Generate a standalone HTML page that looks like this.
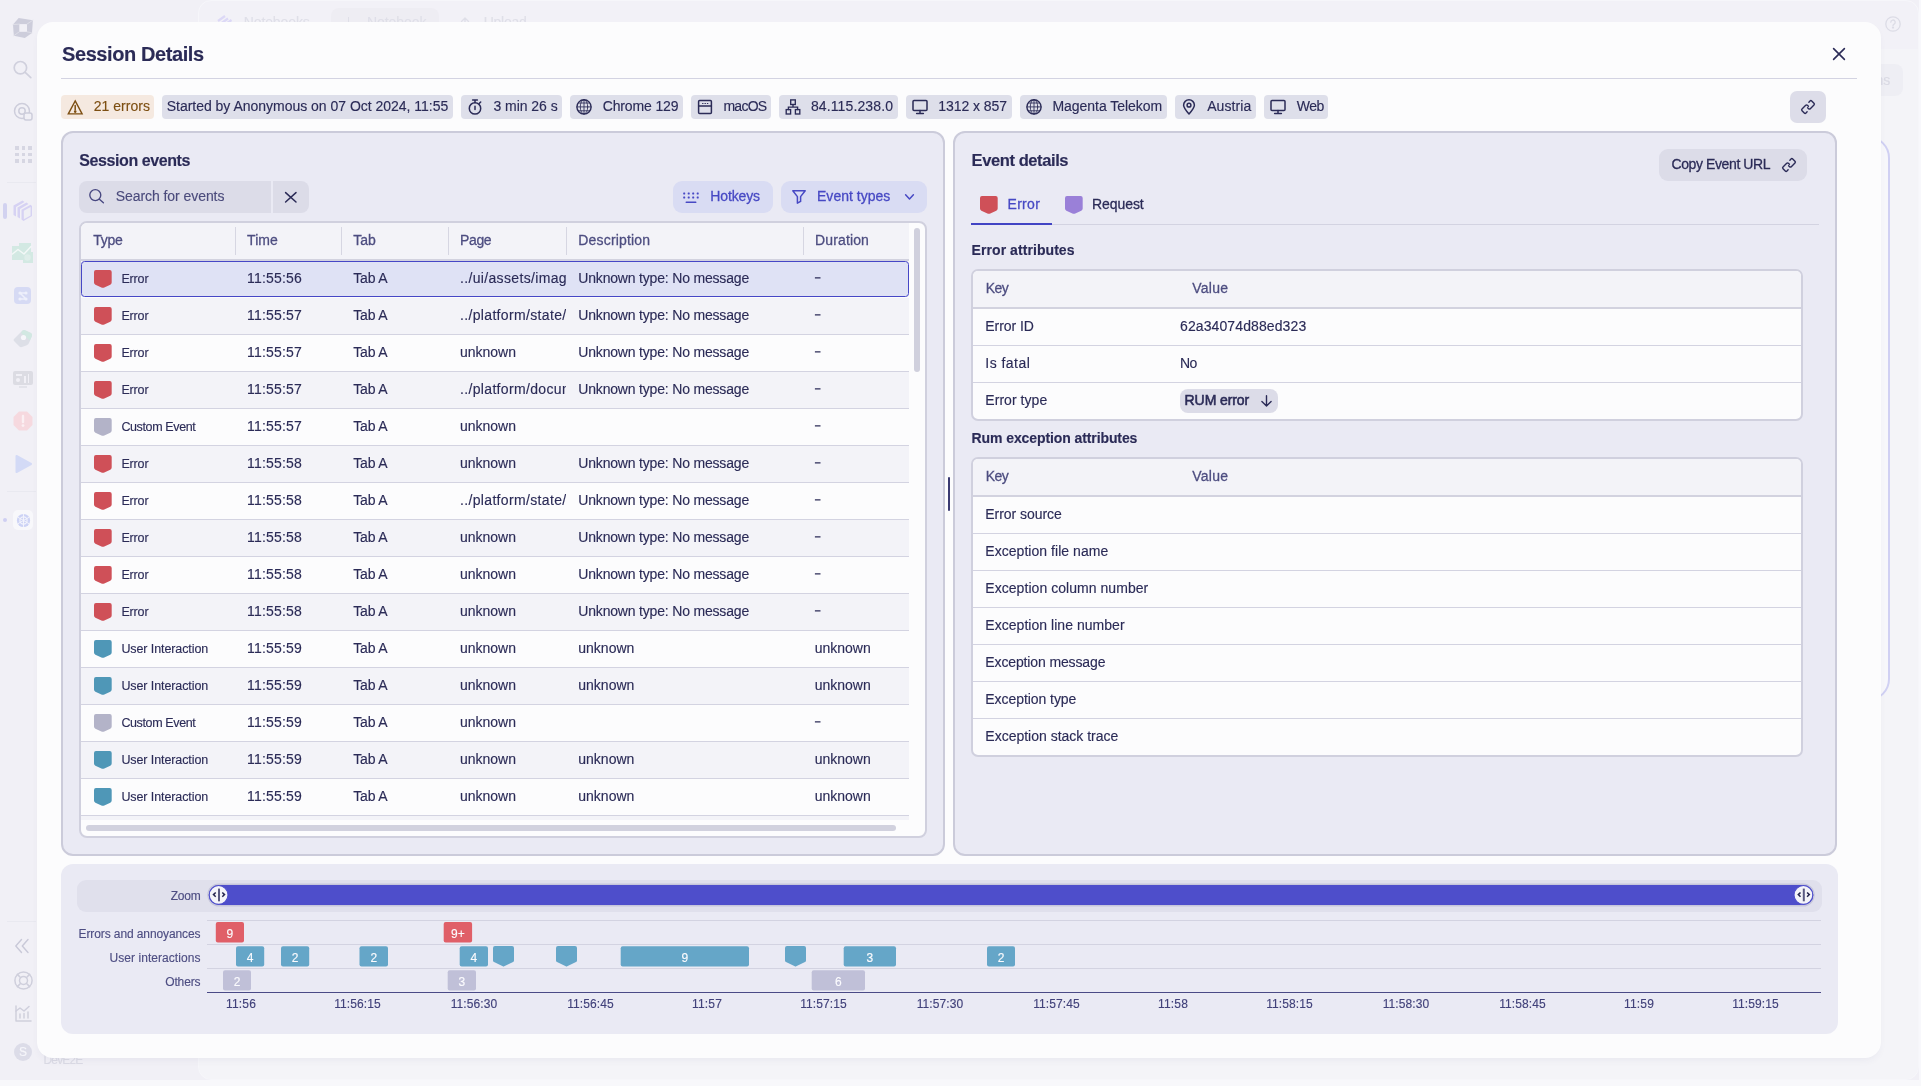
<!DOCTYPE html>
<html><head><meta charset="utf-8"><title>Session Details</title>
<style>
html,body{margin:0;padding:0}
body{width:1921px;height:1086px;overflow:hidden;position:relative;background:#f1f0f6;font-family:"Liberation Sans", sans-serif;}
.a{position:absolute;box-sizing:border-box}
.t{white-space:pre;-webkit-text-stroke:.14px currentColor}
#root{position:absolute;left:0;top:0;width:1921px;height:1086px;will-change:transform}
svg{position:absolute;overflow:visible}

</style></head>
<body><div id="root">
<div class="a" style="left:198px;top:0px;width:1721px;height:1080px;background:linear-gradient(#f2f1f7 0,#f2f1f7 48px,#f4f4f8 48px);border:1px solid #f6f6fa;border-radius:13px;"></div>
<div class="a" style="left:1919px;top:0px;width:2px;height:1086px;background:#f8f8fc;"></div>
<div class="a" style="left:0px;top:1080px;width:1921px;height:6px;background:#f8f8fb;"></div>
<div class="a" style="left:1700px;top:136px;width:190px;height:565px;background:#f7f7fb;border:2px solid #d0d0f3;border-radius:22px;"></div>
<div class="a" style="left:1840px;top:64px;width:63px;height:32px;background:#eeeef4;border-radius:8px;"></div>
<div class="a t" style="top:70.00px;height:20px;line-height:20px;font-size:14px;color:#dadae4;left:1875.5px;">ns</div>
<svg style="left:1885px;top:16px;" width="16" height="16" viewBox="0 0 16 16" fill="none" stroke="#dcdce6" stroke-width="1.3" stroke-linecap="round" stroke-linejoin="round"><circle cx="8" cy="8" r="7.2"/><path d="M5.8 6.2a2.2 2.2 0 1 1 3.3 1.9c-.7.4-1.1.8-1.1 1.6"/><circle cx="8" cy="11.6" r=".5" fill="#dcdce6"/></svg>
<div class="a" style="left:331px;top:8px;width:108px;height:20px;background:#eeedf3;border-radius:8px 8px 0 0;"></div>
<svg style="left:217px;top:14px;" width="16" height="10" viewBox="0 0 16 10" fill="none" stroke="#2b2b57" stroke-width="1.5" stroke-linecap="round" stroke-linejoin="round"><path d="M1 7 L8 2 M4 9.5 L11 4.5 M9 10 L14.5 6" stroke="#dcd8f6" stroke-width="2.2" stroke-linecap="butt"/></svg>
<div class="a" style="left:347.5px;top:17px;width:1.4px;height:8px;background:#dfdfe8;"></div>
<svg style="left:461px;top:17px;" width="8" height="8" viewBox="0 0 8 8" fill="none" stroke="#2b2b57" stroke-width="1.5" stroke-linecap="round" stroke-linejoin="round"><path d="M0.5 4.5 L4 1 L7.5 4.5 M4 1 V8" stroke="#dfdfe8" stroke-width="1.4"/></svg>
<div class="a t" style="top:12.00px;height:20px;line-height:20px;font-size:14px;color:#dfdfe8;letter-spacing:-0.104px;left:243.7px;">Notebooks</div>
<div class="a t" style="top:12.00px;height:20px;line-height:20px;font-size:14px;color:#dfdfe8;letter-spacing:-0.055px;left:367px;">Notebook</div>
<div class="a t" style="top:12.00px;height:20px;line-height:20px;font-size:14px;color:#dfdfe8;letter-spacing:-0.263px;left:483.7px;">Upload</div>
<div class="a t" style="top:1050.00px;height:20px;line-height:20px;font-size:12px;color:#dadae4;letter-spacing:-0.839px;left:43.5px;">DevE2E</div>
<svg style="left:13px;top:18px;" width="20" height="20" viewBox="0 0 20 20" fill="none" stroke="#cdcddb" stroke-width="1.5" stroke-linecap="round" stroke-linejoin="round"><path d="M5.7 0 L19.9 2.2 L19 14.9 L11.8 19.9 L0.8 17.7 L0 6.6Z" fill="#cdcddb" stroke="none"/><path d="M6.3 6.1H14V13.8H6.3Z" fill="#f1f0f6" stroke="none"/><path d="M0 6.6 L6.3 6.1 M14 6.1 L19.9 2.2 M14 13.8 L19 14.9 M6.3 13.8 L0.8 17.7" stroke="#e2e2ea" stroke-width=".8"/></svg>
<svg style="left:13px;top:60px;" width="19" height="19" viewBox="0 0 19 19" fill="none" stroke="#d0d0dd" stroke-width="1.7" stroke-linecap="round" stroke-linejoin="round"><circle cx="7.4" cy="7.7" r="6.2"/><path d="M12.2 12.4 L17.8 17.6"/></svg>
<svg style="left:13px;top:102px;" width="20" height="20" viewBox="0 0 20 20" fill="none" stroke="#cdcddb" stroke-width="1.5" stroke-linecap="round" stroke-linejoin="round"><circle cx="9" cy="9" r="7.5"/><circle cx="9" cy="9" r="3.2"/><rect x="11" y="11" width="8" height="7" rx="2" fill="#f1f0f6"/></svg>
<div class="a" style="left:15.0px;top:146.0px;width:3.5px;height:3.5px;background:#d6d6e2;"></div>
<div class="a" style="left:21.5px;top:146.0px;width:3.5px;height:3.5px;background:#d6d6e2;"></div>
<div class="a" style="left:28.0px;top:146.0px;width:3.5px;height:3.5px;background:#d6d6e2;"></div>
<div class="a" style="left:15.0px;top:152.5px;width:3.5px;height:3.5px;background:#d6d6e2;"></div>
<div class="a" style="left:21.5px;top:152.5px;width:3.5px;height:3.5px;background:#d6d6e2;"></div>
<div class="a" style="left:28.0px;top:152.5px;width:3.5px;height:3.5px;background:#d6d6e2;"></div>
<div class="a" style="left:15.0px;top:159.0px;width:3.5px;height:3.5px;background:#d6d6e2;"></div>
<div class="a" style="left:21.5px;top:159.0px;width:3.5px;height:3.5px;background:#d6d6e2;"></div>
<div class="a" style="left:28.0px;top:159.0px;width:3.5px;height:3.5px;background:#d6d6e2;"></div>
<div class="a" style="left:7px;top:182px;width:29px;height:1px;background:#e9e9f0;"></div>
<div class="a" style="left:3px;top:203px;width:3.5px;height:16px;background:#d2d2f0;border-radius:2px;"></div>
<svg style="left:13px;top:200px;" width="20" height="22" viewBox="0 0 20 22" fill="none" stroke="#2b2b57" stroke-width="1" stroke-linecap="round" stroke-linejoin="round"><path d="M0.5 5.5 L9.5 0.5 L11.5 2 L3 7 V16.5 L0.5 15Z M4.5 7.5 L13.5 2.5 L15.5 4 L7 9 V18.5 L4.5 17Z" fill="#d6d2f3" stroke="none"/><path d="M8.5 9.8 L17.5 4.8 L19 6 V16 L10.5 21 L8.5 19.5Z" fill="#d6d2f3" stroke="none"/><path d="M10.8 10.8 L17.6 7 V15.4 L10.8 19.2Z" fill="#efeff5" stroke="none"/></svg>
<svg style="left:12px;top:243px;" width="22" height="20" viewBox="0 0 22 20" fill="none" stroke="#2b2b57" stroke-width="1.5" stroke-linecap="round" stroke-linejoin="round"><path d="M0 3H7V0H19V9H21V20H11V17H0Z" fill="#d3e9e3" stroke="none"/><path d="M0.5 11 L6 6.5 L12 11 L19 3.5" stroke="#f3f8f7" stroke-width="1.5"/><circle cx="15.5" cy="14.5" r="3.2" fill="#dfeeea" stroke="none"/></svg>
<div class="a" style="left:14px;top:287px;width:17px;height:17px;background:#d6daf4;border-radius:4px;"></div>
<svg style="left:16.5px;top:289.5px;" width="12" height="12" viewBox="0 0 12 12" fill="none" stroke="#2b2b57" stroke-width="1.5" stroke-linecap="round" stroke-linejoin="round"><path d="M3 3 H9 M3 9 H9 M3 3 L9 9" stroke="#eef0fb" stroke-width="1.5"/><circle cx="3" cy="3" r="1.6" fill="#eef0fb" stroke="none"/><circle cx="9" cy="3" r="1.6" fill="#eef0fb" stroke="none"/><circle cx="3" cy="9" r="1.6" fill="#eef0fb" stroke="none"/><circle cx="9" cy="9" r="1.6" fill="#eef0fb" stroke="none"/></svg>
<svg style="left:13px;top:328px;" width="20" height="20" viewBox="0 0 20 20" fill="none" stroke="#2b2b57" stroke-width="1.5" stroke-linecap="round" stroke-linejoin="round"><path d="M1 11 L9 3 Q10.5 1.6 12.5 2.4 L18 5 Q19.6 5.9 19 7.8 L16 15 Q15.4 16.6 13.8 17.2 L9 19 Q7.4 19.5 6.2 18.3 L1 13 Q0 12 1 11Z" fill="#dddfe7" stroke="none"/><path d="M9 3 Q10.5 1.6 12.5 2.4 L18 5 Q19.6 5.9 19 7.8 L17 12.5 L8 5Z" fill="#d2e8e2" stroke="none"/><circle cx="10.5" cy="9.5" r="2.6" fill="#f6f6fa" stroke="none"/></svg>
<div class="a" style="left:13px;top:371px;width:20px;height:14px;background:#dcdce3;border-radius:2px;"></div>
<div class="a" style="left:19px;top:386px;width:8px;height:2px;background:#e3e3ea;"></div>
<div class="a" style="left:16px;top:374px;width:6px;height:1.6px;background:#f1f0f6;"></div>
<div class="a" style="left:16px;top:378px;width:4px;height:4px;background:#f1f0f6;border-radius:2px;"></div>
<div class="a" style="left:24px;top:376px;width:1.6px;height:7px;background:#f1f0f6;"></div>
<div class="a" style="left:27.5px;top:374px;width:1.6px;height:9px;background:#f1f0f6;"></div>
<svg style="left:13px;top:411px;" width="20" height="20" viewBox="0 0 20 20" fill="none" stroke="#2b2b57" stroke-width="1.5" stroke-linecap="round" stroke-linejoin="round"><path d="M6 0.5 H14 L19.5 6 V14 L14 19.5 H6 L0.5 14 V6Z" fill="#f6d9df" stroke="none"/><path d="M10 5 V11" stroke="#fbf0f3" stroke-width="2.4"/><circle cx="10" cy="14.6" r="1.4" fill="#fbf0f3" stroke="none"/></svg>
<svg style="left:15px;top:454px;" width="18" height="20" viewBox="0 0 18 20" fill="none" stroke="#2b2b57" stroke-width="1.5" stroke-linecap="round" stroke-linejoin="round"><path d="M1.5 2 L16 10 L1.5 18Z" fill="#d3daf6" stroke="#d3daf6" stroke-width="2"/></svg>
<div class="a" style="left:7px;top:491px;width:29px;height:1px;background:#e9e9f0;"></div>
<div class="a" style="left:13px;top:510px;width:20px;height:20px;background:#f8f8fb;border-radius:5px;"></div>
<svg style="left:15.5px;top:512.5px;" width="15" height="15" viewBox="0 0 15 15" fill="none" stroke="#2b2b57" stroke-width="1.5" stroke-linecap="round" stroke-linejoin="round"><circle cx="7.5" cy="7.5" r="6.6" fill="#cdd3f5" stroke="none"/><circle cx="7.5" cy="7.5" r="3.6" stroke="#f3f4fc" stroke-width="1.2"/><path d="M7.5 1.5V13.5M2.3 4.5L12.7 10.5M12.7 4.5L2.3 10.5" stroke="#f3f4fc" stroke-width="1"/></svg>
<div class="a" style="left:3px;top:518px;width:3.5px;height:3.5px;background:#cfcff2;border-radius:2px;"></div>
<div class="a" style="left:7px;top:921px;width:29px;height:1px;background:#e9e9f0;"></div>
<svg style="left:15px;top:939px;" width="14" height="14" viewBox="0 0 14 14" fill="none" stroke="#c9c9d8" stroke-width="1.4" stroke-linecap="round" stroke-linejoin="round"><path d="M6.5 0.5 L0.8 7 L6.5 13.5 M13 0.5 L7.3 7 L13 13.5"/></svg>
<svg style="left:13.5px;top:970.5px;" width="19" height="19" viewBox="0 0 19 19" fill="none" stroke="#cfcfdc" stroke-width="1.5" stroke-linecap="round" stroke-linejoin="round"><circle cx="9.5" cy="9.5" r="8.6"/><circle cx="9.5" cy="9.5" r="4"/><path d="M3.4 3.4L6.7 6.7M15.6 3.4L12.3 6.7M3.4 15.6L6.7 12.3M15.6 15.6L12.3 12.3"/></svg>
<svg style="left:14.5px;top:1005px;" width="17" height="17" viewBox="0 0 17 17" fill="none" stroke="#cfcfdc" stroke-width="1.5" stroke-linecap="round" stroke-linejoin="round"><path d="M1 1V16H16"/><path d="M1 6L5 3L9 6L14 1.5"/><path d="M5 9V13M9 8.5V13M13 7V13"/></svg>
<div class="a" style="left:14px;top:1043px;width:18px;height:18px;background:#dcdce8;border-radius:9px;"></div>
<div class="a t" style="top:1042.00px;height:20px;line-height:20px;font-size:12px;color:#f6f6fa;left:18.99px;">S</div>
<div class="a" style="left:37px;top:22px;width:1844px;height:1036px;background:#fcfcfd;border-radius:16px;box-shadow:0 4px 8px -3px rgba(60,60,110,.08);"></div>
<div class="a t" style="top:44.00px;height:20px;line-height:20px;font-size:20px;color:#2b2b57;font-weight:700;letter-spacing:-0.410px;left:62px;">Session Details</div>
<div class="a" style="left:61px;top:78px;width:1796px;height:1px;background:#d3d3e2;"></div>
<svg style="left:1833px;top:48px;" width="12" height="12" viewBox="0 0 12 12" fill="none" stroke="#2b2b57" stroke-width="1.6" stroke-linecap="round" stroke-linejoin="round"><path d="M0.6 0.6 L11.4 11.4 M11.4 0.6 L0.6 11.4"/></svg>
<div class="a" style="left:61px;top:95px;width:93px;height:24px;background:#f5e9e0;border-radius:4px;"></div>
<svg style="left:67px;top:99px;color:#7d4f12" width="16" height="16" viewBox="0 0 16 16" fill="none" stroke="#7d4f12" stroke-width="1.5" stroke-linecap="round" stroke-linejoin="round"><path d="M8.2 1.9 L15.1 14.9 H1.3 Z" stroke-linejoin="miter" stroke-width="1.4"/><path d="M8.2 6.4 V10.8"/><circle cx="8.2" cy="12.6" r=".6" fill="currentColor"/></svg>
<div class="a t" style="top:96.00px;height:20px;line-height:20px;font-size:14px;color:#7d4f12;letter-spacing:0.030px;left:93.7px;">21 errors</div>
<div class="a" style="left:162px;top:95px;width:291px;height:24px;background:#dedfea;border-radius:4px;"></div>
<div class="a t" style="top:96.00px;height:20px;line-height:20px;font-size:14px;color:#2b2b57;letter-spacing:-0.016px;left:166.7px;">Started by Anonymous on 07 Oct 2024, 11:55</div>
<div class="a" style="left:461px;top:95px;width:101px;height:24px;background:#dedfea;border-radius:4px;"></div>
<svg style="left:467px;top:99px;color:#2b2b57" width="16" height="16" viewBox="0 0 16 16" fill="none" stroke="#2b2b57" stroke-width="1.5" stroke-linecap="round" stroke-linejoin="round"><circle cx="8" cy="9.4" r="5.7"/><path d="M5.6 1.1 H10.4 M8 1.1 V3.6 M8 7.2 V10.4 M12.4 4.3 L13.7 3"/></svg>
<div class="a t" style="top:96.00px;height:20px;line-height:20px;font-size:14px;color:#2b2b57;letter-spacing:-0.029px;left:493.4px;">3 min 26 s</div>
<div class="a" style="left:570px;top:95px;width:113px;height:24px;background:#dedfea;border-radius:4px;"></div>
<svg style="left:576px;top:99px;color:#2b2b57" width="16" height="16" viewBox="0 0 16 16" fill="none" stroke="#2b2b57" stroke-width="1.5" stroke-linecap="round" stroke-linejoin="round"><circle cx="8" cy="7.9" r="7.1" stroke-width="1.4"/><g stroke-width=".95" stroke-opacity=".9"><path d="M1 7.9 H15 M8 0.9 V14.9 M2.3 4 H13.7 M2.3 11.8 H13.7"/><ellipse cx="8" cy="7.9" rx="3.7" ry="7.1"/></g></svg>
<div class="a t" style="top:96.00px;height:20px;line-height:20px;font-size:14px;color:#2b2b57;letter-spacing:-0.135px;left:602.7px;">Chrome 129</div>
<div class="a" style="left:691px;top:95px;width:80px;height:24px;background:#dedfea;border-radius:4px;"></div>
<svg style="left:697px;top:99px;color:#2b2b57" width="16" height="16" viewBox="0 0 16 16" fill="none" stroke="#2b2b57" stroke-width="1.5" stroke-linecap="round" stroke-linejoin="round"><rect x="1.6" y="1.6" width="12.8" height="12.8" rx="1"/><path d="M1.6 7 H14.4" stroke-width="1.3"/><path d="M5.6 4.5 H6 M8 4.5 H8.4 M10.4 4.5 H10.8" stroke-width="1.2"/></svg>
<div class="a t" style="top:96.00px;height:20px;line-height:20px;font-size:14px;color:#2b2b57;letter-spacing:-0.717px;left:723.4px;">macOS</div>
<div class="a" style="left:779px;top:95px;width:119px;height:24px;background:#dedfea;border-radius:4px;"></div>
<svg style="left:785px;top:99px;color:#2b2b57" width="16" height="16" viewBox="0 0 16 16" fill="none" stroke="#2b2b57" stroke-width="1.5" stroke-linecap="round" stroke-linejoin="round"><g stroke-width="1.35" stroke-linejoin="miter"><rect x="5.7" y="0.9" width="4.6" height="4.6"/><rect x="1.2" y="10.6" width="4.4" height="4.4"/><rect x="10.4" y="10.6" width="4.4" height="4.4"/><path d="M8 5.5 V8.1 M3.4 10.6 V8.1 H12.6 V10.6"/></g></svg>
<div class="a t" style="top:96.00px;height:20px;line-height:20px;font-size:14px;color:#2b2b57;letter-spacing:0.123px;left:810.9px;">84.115.238.0</div>
<div class="a" style="left:906px;top:95px;width:106px;height:24px;background:#dedfea;border-radius:4px;"></div>
<svg style="left:912px;top:99px;color:#2b2b57" width="16" height="16" viewBox="0 0 16 16" fill="none" stroke="#2b2b57" stroke-width="1.5" stroke-linecap="round" stroke-linejoin="round"><rect x="1" y="1.6" width="14" height="9.8" rx="1"/><path d="M8 11.4 V14.4 M4.6 14.4 H11.4"/></svg>
<div class="a t" style="top:96.00px;height:20px;line-height:20px;font-size:14px;color:#2b2b57;letter-spacing:-0.060px;left:938.3px;">1312 x 857</div>
<div class="a" style="left:1020px;top:95px;width:147px;height:24px;background:#dedfea;border-radius:4px;"></div>
<svg style="left:1026px;top:99px;color:#2b2b57" width="16" height="16" viewBox="0 0 16 16" fill="none" stroke="#2b2b57" stroke-width="1.5" stroke-linecap="round" stroke-linejoin="round"><circle cx="8" cy="7.9" r="7.1" stroke-width="1.4"/><g stroke-width=".95" stroke-opacity=".9"><path d="M1 7.9 H15 M8 0.9 V14.9 M2.3 4 H13.7 M2.3 11.8 H13.7"/><ellipse cx="8" cy="7.9" rx="3.7" ry="7.1"/></g></svg>
<div class="a t" style="top:96.00px;height:20px;line-height:20px;font-size:14px;color:#2b2b57;letter-spacing:-0.030px;left:1052.4px;">Magenta Telekom</div>
<div class="a" style="left:1175px;top:95px;width:81px;height:24px;background:#dedfea;border-radius:4px;"></div>
<svg style="left:1181px;top:99px;color:#2b2b57" width="16" height="16" viewBox="0 0 16 16" fill="none" stroke="#2b2b57" stroke-width="1.5" stroke-linecap="round" stroke-linejoin="round"><path d="M8 15 C4.4 10.8 2.6 8.6 2.6 6.2 A5.4 5.4 0 0 1 13.4 6.2 C13.4 8.6 11.6 10.8 8 15Z"/><circle cx="8" cy="6.2" r="1.9"/></svg>
<div class="a t" style="top:96.00px;height:20px;line-height:20px;font-size:14px;color:#2b2b57;letter-spacing:0.089px;left:1207.2px;">Austria</div>
<div class="a" style="left:1264px;top:95px;width:64px;height:24px;background:#dedfea;border-radius:4px;"></div>
<svg style="left:1270px;top:99px;color:#2b2b57" width="16" height="16" viewBox="0 0 16 16" fill="none" stroke="#2b2b57" stroke-width="1.5" stroke-linecap="round" stroke-linejoin="round"><rect x="1" y="1.6" width="14" height="9.8" rx="1"/><path d="M8 11.4 V14.4 M4.6 14.4 H11.4"/></svg>
<div class="a t" style="top:96.00px;height:20px;line-height:20px;font-size:14px;color:#2b2b57;letter-spacing:-0.516px;left:1296.8px;">Web</div>
<div class="a" style="left:1790px;top:91px;width:36px;height:32px;background:#dddde9;border-radius:7px;"></div>
<svg style="left:1799.9px;top:98.9px" width="16" height="16" viewBox="0 0 16 16" fill="none" stroke="#2b2b57" stroke-width="1.4" stroke-linecap="round" stroke-linejoin="round"><g transform="translate(8 8) rotate(-45)"><path d="M0.75 -0.2 V-1.6 Q0.75 -2.8 -0.45 -2.8 H-5.65 Q-6.85 -2.8 -6.85 -1.6 V1.6 Q-6.85 2.8 -5.65 2.8 H-4.05"/><path d="M-0.75 0.2 V1.6 Q-0.75 2.8 0.45 2.8 H5.65 Q6.85 2.8 6.85 1.6 V-1.6 Q6.85 -2.8 5.65 -2.8 H4.05"/></g></svg>
<div class="a" style="left:61px;top:131px;width:884px;height:725px;background:#eaeaf4;border:2px solid #cbcbda;border-radius:12px;"></div>
<div class="a t" style="top:150.50px;height:20px;line-height:20px;font-size:16px;color:#2b2b57;font-weight:700;letter-spacing:-0.414px;left:79.3px;">Session events</div>
<div class="a" style="left:79px;top:181px;width:192px;height:32px;background:#dcdce8;border-radius:8px 0 0 8px;"></div>
<svg style="left:89px;top:189px;" width="15" height="15" viewBox="0 0 15 15" fill="none" stroke="#474780" stroke-width="1.35" stroke-linecap="round" stroke-linejoin="round"><circle cx="6.3" cy="6.1" r="5.5"/><path d="M10.4 10.2 L14.4 13.7"/></svg>
<div class="a t" style="top:186.00px;height:20px;line-height:20px;font-size:14px;color:#4b4b7c;letter-spacing:-0.061px;left:115.7px;">Search for events</div>
<div class="a" style="left:273px;top:181px;width:36px;height:32px;background:#dcdce8;border-radius:0 8px 8px 0;"></div>
<svg style="left:285.3px;top:191.6px;" width="11.6" height="10.6" viewBox="0 0 11.6 10.6" fill="none" stroke="#2b2b57" stroke-width="1.5" stroke-linecap="round" stroke-linejoin="round"><path d="M0.6 0.6 L11 10 M11 0.6 L0.6 10"/></svg>
<div class="a" style="left:673px;top:181px;width:100px;height:32px;background:#d9dcf3;border-radius:9px;"></div>
<svg style="left:683px;top:191.5px" width="16" height="12" viewBox="0 0 16 12" fill="#4749c4"><rect x="0.2" y="0.6" width="2" height="1.8" rx=".4"/><rect x="4.7" y="0.6" width="2" height="1.8" rx=".4"/><rect x="9.2" y="0.6" width="2" height="1.8" rx=".4"/><rect x="13.7" y="0.6" width="2" height="1.8" rx=".4"/><rect x="0.2" y="4.6" width="2" height="1.8" rx=".4"/><rect x="4.7" y="4.6" width="2" height="1.8" rx=".4"/><rect x="9.2" y="4.6" width="2" height="1.8" rx=".4"/><rect x="13.7" y="4.6" width="2" height="1.8" rx=".4"/><rect x="2.6" y="9.4" width="10.8" height="1.6" rx=".6"/></svg>
<div class="a t" style="top:186.00px;height:20px;line-height:20px;font-size:14px;color:#4749c4;letter-spacing:-0.125px;left:710.3px;-webkit-text-stroke:.28px currentColor;">Hotkeys</div>
<div class="a" style="left:781px;top:181px;width:146px;height:32px;background:#d9dcf3;border-radius:9px;"></div>
<svg style="left:792px;top:190px;" width="14" height="14" viewBox="0 0 14 14" fill="none" stroke="#4749c4" stroke-width="1.5" stroke-linecap="round" stroke-linejoin="round"><path d="M0.8 0.8 H13.2 L8.6 6.6 V11.4 L5.4 13.2 V6.6 Z"/></svg>
<div class="a t" style="top:186.00px;height:20px;line-height:20px;font-size:14px;color:#4749c4;letter-spacing:0.022px;left:817px;-webkit-text-stroke:.28px currentColor;">Event types</div>
<svg style="left:904.5px;top:194px;" width="9" height="6" viewBox="0 0 9 6" fill="none" stroke="#4749c4" stroke-width="1.5" stroke-linecap="round" stroke-linejoin="round"><path d="M0.6 0.8 L4.5 4.9 L8.4 0.8"/></svg>
<div class="a" style="left:79px;top:221px;width:848px;height:617px;background:#fcfcfd;border:2px solid #d0d0de;border-radius:8px;overflow:hidden;"></div>
<div class="a" style="left:81px;top:223px;width:828px;height:36px;background:#f3f3f8;border-radius:6px 0 0 0;"></div>
<div class="a" style="left:81px;top:259px;width:828px;height:2px;background:#d2d2df;"></div>
<div class="a" style="left:235px;top:227.3px;width:1.2px;height:27.5px;background:#d6d6e2;"></div>
<div class="a" style="left:341px;top:227.3px;width:1.2px;height:27.5px;background:#d6d6e2;"></div>
<div class="a" style="left:448.3px;top:227.3px;width:1.2px;height:27.5px;background:#d6d6e2;"></div>
<div class="a" style="left:566px;top:227.3px;width:1.2px;height:27.5px;background:#d6d6e2;"></div>
<div class="a" style="left:803px;top:227.3px;width:1.2px;height:27.5px;background:#d6d6e2;"></div>
<div class="a t" style="top:230.00px;height:20px;line-height:20px;font-size:14px;color:#4d4d80;letter-spacing:-0.265px;left:93.3px;-webkit-text-stroke:.28px currentColor;">Type</div>
<div class="a t" style="top:230.00px;height:20px;line-height:20px;font-size:14px;color:#4d4d80;letter-spacing:0.102px;left:247px;-webkit-text-stroke:.28px currentColor;">Time</div>
<div class="a t" style="top:230.00px;height:20px;line-height:20px;font-size:14px;color:#4d4d80;letter-spacing:-0.026px;left:353.3px;-webkit-text-stroke:.28px currentColor;">Tab</div>
<div class="a t" style="top:230.00px;height:20px;line-height:20px;font-size:14px;color:#4d4d80;letter-spacing:-0.351px;left:460px;-webkit-text-stroke:.28px currentColor;">Page</div>
<div class="a t" style="top:230.00px;height:20px;line-height:20px;font-size:14px;color:#4d4d80;letter-spacing:0.179px;left:578.3px;-webkit-text-stroke:.28px currentColor;">Description</div>
<div class="a t" style="top:230.00px;height:20px;line-height:20px;font-size:14px;color:#4d4d80;letter-spacing:0.135px;left:815px;-webkit-text-stroke:.28px currentColor;">Duration</div>
<div class="a" style="left:81px;top:261px;width:828px;height:36px;background:#dfe2f5;border:1px solid #4647c6;border-radius:3.5px;"></div>
<svg style="left:94.2px;top:270px" width="17.7" height="18" viewBox="0 0 17.7 18"><path d="M2 0 H15.7 A2 2 0 0 1 17.7 2 V12.6 Q17.7 14.2 16.3 14.8 L10.3 17.5 Q8.85 18.15 7.4 17.5 L1.4 14.8 Q0 14.2 0 12.6 V2 A2 2 0 0 1 2 0Z" fill="#cf5058"/></svg>
<div class="a t" style="top:269.00px;height:20px;line-height:20px;font-size:12.5px;color:#2b2b57;letter-spacing:-0.156px;left:121.4px;">Error</div>
<div class="a t" style="top:268.00px;height:20px;line-height:20px;font-size:14px;color:#2b2b57;letter-spacing:0.191px;left:247px;">11:55:56</div>
<div class="a t" style="top:268.00px;height:20px;line-height:20px;font-size:14px;color:#2b2b57;letter-spacing:-0.206px;left:353.3px;">Tab A</div>
<div class="a t" style="top:268.00px;height:20px;line-height:20px;font-size:14px;color:#2b2b57;letter-spacing:0.340px;left:460px;width:106.3px;overflow:hidden;">../ui/assets/image</div>
<div class="a t" style="top:268.00px;height:20px;line-height:20px;font-size:14px;color:#2b2b57;letter-spacing:-0.183px;left:578.3px;">Unknown type: No message</div>
<svg style="left:0;top:0" width="1921" height="1086"><rect x="814.9" y="277.25" width="5.6" height="1.25" fill="#2b2b57"/></svg>
<div class="a" style="left:81px;top:298px;width:828px;height:36px;background:#f3f3f8;"></div>
<div class="a" style="left:81px;top:334px;width:828px;height:1px;background:#d3d3e1;"></div>
<svg style="left:94.2px;top:307px" width="17.7" height="18" viewBox="0 0 17.7 18"><path d="M2 0 H15.7 A2 2 0 0 1 17.7 2 V12.6 Q17.7 14.2 16.3 14.8 L10.3 17.5 Q8.85 18.15 7.4 17.5 L1.4 14.8 Q0 14.2 0 12.6 V2 A2 2 0 0 1 2 0Z" fill="#cf5058"/></svg>
<div class="a t" style="top:306.00px;height:20px;line-height:20px;font-size:12.5px;color:#2b2b57;letter-spacing:-0.156px;left:121.4px;">Error</div>
<div class="a t" style="top:305.00px;height:20px;line-height:20px;font-size:14px;color:#2b2b57;letter-spacing:0.191px;left:247px;">11:55:57</div>
<div class="a t" style="top:305.00px;height:20px;line-height:20px;font-size:14px;color:#2b2b57;letter-spacing:-0.206px;left:353.3px;">Tab A</div>
<div class="a t" style="top:305.00px;height:20px;line-height:20px;font-size:14px;color:#2b2b57;letter-spacing:0.340px;left:460px;width:106.3px;overflow:hidden;">../platform/state/</div>
<div class="a t" style="top:305.00px;height:20px;line-height:20px;font-size:14px;color:#2b2b57;letter-spacing:-0.183px;left:578.3px;">Unknown type: No message</div>
<svg style="left:0;top:0" width="1921" height="1086"><rect x="814.9" y="314.25" width="5.6" height="1.25" fill="#2b2b57"/></svg>
<div class="a" style="left:81px;top:371px;width:828px;height:1px;background:#d3d3e1;"></div>
<svg style="left:94.2px;top:344px" width="17.7" height="18" viewBox="0 0 17.7 18"><path d="M2 0 H15.7 A2 2 0 0 1 17.7 2 V12.6 Q17.7 14.2 16.3 14.8 L10.3 17.5 Q8.85 18.15 7.4 17.5 L1.4 14.8 Q0 14.2 0 12.6 V2 A2 2 0 0 1 2 0Z" fill="#cf5058"/></svg>
<div class="a t" style="top:343.00px;height:20px;line-height:20px;font-size:12.5px;color:#2b2b57;letter-spacing:-0.156px;left:121.4px;">Error</div>
<div class="a t" style="top:342.00px;height:20px;line-height:20px;font-size:14px;color:#2b2b57;letter-spacing:0.191px;left:247px;">11:55:57</div>
<div class="a t" style="top:342.00px;height:20px;line-height:20px;font-size:14px;color:#2b2b57;letter-spacing:-0.206px;left:353.3px;">Tab A</div>
<div class="a t" style="top:342.00px;height:20px;line-height:20px;font-size:14px;color:#2b2b57;letter-spacing:-0.007px;left:460px;">unknown</div>
<div class="a t" style="top:342.00px;height:20px;line-height:20px;font-size:14px;color:#2b2b57;letter-spacing:-0.183px;left:578.3px;">Unknown type: No message</div>
<svg style="left:0;top:0" width="1921" height="1086"><rect x="814.9" y="351.25" width="5.6" height="1.25" fill="#2b2b57"/></svg>
<div class="a" style="left:81px;top:372px;width:828px;height:36px;background:#f3f3f8;"></div>
<div class="a" style="left:81px;top:408px;width:828px;height:1px;background:#d3d3e1;"></div>
<svg style="left:94.2px;top:381px" width="17.7" height="18" viewBox="0 0 17.7 18"><path d="M2 0 H15.7 A2 2 0 0 1 17.7 2 V12.6 Q17.7 14.2 16.3 14.8 L10.3 17.5 Q8.85 18.15 7.4 17.5 L1.4 14.8 Q0 14.2 0 12.6 V2 A2 2 0 0 1 2 0Z" fill="#cf5058"/></svg>
<div class="a t" style="top:380.00px;height:20px;line-height:20px;font-size:12.5px;color:#2b2b57;letter-spacing:-0.156px;left:121.4px;">Error</div>
<div class="a t" style="top:379.00px;height:20px;line-height:20px;font-size:14px;color:#2b2b57;letter-spacing:0.191px;left:247px;">11:55:57</div>
<div class="a t" style="top:379.00px;height:20px;line-height:20px;font-size:14px;color:#2b2b57;letter-spacing:-0.206px;left:353.3px;">Tab A</div>
<div class="a t" style="top:379.00px;height:20px;line-height:20px;font-size:14px;color:#2b2b57;letter-spacing:0.340px;left:460px;width:106.3px;overflow:hidden;">../platform/docum</div>
<div class="a t" style="top:379.00px;height:20px;line-height:20px;font-size:14px;color:#2b2b57;letter-spacing:-0.183px;left:578.3px;">Unknown type: No message</div>
<svg style="left:0;top:0" width="1921" height="1086"><rect x="814.9" y="388.25" width="5.6" height="1.25" fill="#2b2b57"/></svg>
<div class="a" style="left:81px;top:445px;width:828px;height:1px;background:#d3d3e1;"></div>
<svg style="left:94.2px;top:418px" width="17.7" height="18" viewBox="0 0 17.7 18"><path d="M2 0 H15.7 A2 2 0 0 1 17.7 2 V12.6 Q17.7 14.2 16.3 14.8 L10.3 17.5 Q8.85 18.15 7.4 17.5 L1.4 14.8 Q0 14.2 0 12.6 V2 A2 2 0 0 1 2 0Z" fill="#b3b3c8"/></svg>
<div class="a t" style="top:417.00px;height:20px;line-height:20px;font-size:12.5px;color:#2b2b57;letter-spacing:-0.376px;left:121.4px;">Custom Event</div>
<div class="a t" style="top:416.00px;height:20px;line-height:20px;font-size:14px;color:#2b2b57;letter-spacing:0.191px;left:247px;">11:55:57</div>
<div class="a t" style="top:416.00px;height:20px;line-height:20px;font-size:14px;color:#2b2b57;letter-spacing:-0.206px;left:353.3px;">Tab A</div>
<div class="a t" style="top:416.00px;height:20px;line-height:20px;font-size:14px;color:#2b2b57;letter-spacing:-0.007px;left:460px;">unknown</div>
<svg style="left:0;top:0" width="1921" height="1086"><rect x="814.9" y="425.25" width="5.6" height="1.25" fill="#2b2b57"/></svg>
<div class="a" style="left:81px;top:446px;width:828px;height:36px;background:#f3f3f8;"></div>
<div class="a" style="left:81px;top:482px;width:828px;height:1px;background:#d3d3e1;"></div>
<svg style="left:94.2px;top:455px" width="17.7" height="18" viewBox="0 0 17.7 18"><path d="M2 0 H15.7 A2 2 0 0 1 17.7 2 V12.6 Q17.7 14.2 16.3 14.8 L10.3 17.5 Q8.85 18.15 7.4 17.5 L1.4 14.8 Q0 14.2 0 12.6 V2 A2 2 0 0 1 2 0Z" fill="#cf5058"/></svg>
<div class="a t" style="top:454.00px;height:20px;line-height:20px;font-size:12.5px;color:#2b2b57;letter-spacing:-0.156px;left:121.4px;">Error</div>
<div class="a t" style="top:453.00px;height:20px;line-height:20px;font-size:14px;color:#2b2b57;letter-spacing:0.191px;left:247px;">11:55:58</div>
<div class="a t" style="top:453.00px;height:20px;line-height:20px;font-size:14px;color:#2b2b57;letter-spacing:-0.206px;left:353.3px;">Tab A</div>
<div class="a t" style="top:453.00px;height:20px;line-height:20px;font-size:14px;color:#2b2b57;letter-spacing:-0.007px;left:460px;">unknown</div>
<div class="a t" style="top:453.00px;height:20px;line-height:20px;font-size:14px;color:#2b2b57;letter-spacing:-0.183px;left:578.3px;">Unknown type: No message</div>
<svg style="left:0;top:0" width="1921" height="1086"><rect x="814.9" y="462.25" width="5.6" height="1.25" fill="#2b2b57"/></svg>
<div class="a" style="left:81px;top:519px;width:828px;height:1px;background:#d3d3e1;"></div>
<svg style="left:94.2px;top:492px" width="17.7" height="18" viewBox="0 0 17.7 18"><path d="M2 0 H15.7 A2 2 0 0 1 17.7 2 V12.6 Q17.7 14.2 16.3 14.8 L10.3 17.5 Q8.85 18.15 7.4 17.5 L1.4 14.8 Q0 14.2 0 12.6 V2 A2 2 0 0 1 2 0Z" fill="#cf5058"/></svg>
<div class="a t" style="top:491.00px;height:20px;line-height:20px;font-size:12.5px;color:#2b2b57;letter-spacing:-0.156px;left:121.4px;">Error</div>
<div class="a t" style="top:490.00px;height:20px;line-height:20px;font-size:14px;color:#2b2b57;letter-spacing:0.191px;left:247px;">11:55:58</div>
<div class="a t" style="top:490.00px;height:20px;line-height:20px;font-size:14px;color:#2b2b57;letter-spacing:-0.206px;left:353.3px;">Tab A</div>
<div class="a t" style="top:490.00px;height:20px;line-height:20px;font-size:14px;color:#2b2b57;letter-spacing:0.340px;left:460px;width:106.3px;overflow:hidden;">../platform/state/</div>
<div class="a t" style="top:490.00px;height:20px;line-height:20px;font-size:14px;color:#2b2b57;letter-spacing:-0.183px;left:578.3px;">Unknown type: No message</div>
<svg style="left:0;top:0" width="1921" height="1086"><rect x="814.9" y="499.25" width="5.6" height="1.25" fill="#2b2b57"/></svg>
<div class="a" style="left:81px;top:520px;width:828px;height:36px;background:#f3f3f8;"></div>
<div class="a" style="left:81px;top:556px;width:828px;height:1px;background:#d3d3e1;"></div>
<svg style="left:94.2px;top:529px" width="17.7" height="18" viewBox="0 0 17.7 18"><path d="M2 0 H15.7 A2 2 0 0 1 17.7 2 V12.6 Q17.7 14.2 16.3 14.8 L10.3 17.5 Q8.85 18.15 7.4 17.5 L1.4 14.8 Q0 14.2 0 12.6 V2 A2 2 0 0 1 2 0Z" fill="#cf5058"/></svg>
<div class="a t" style="top:528.00px;height:20px;line-height:20px;font-size:12.5px;color:#2b2b57;letter-spacing:-0.156px;left:121.4px;">Error</div>
<div class="a t" style="top:527.00px;height:20px;line-height:20px;font-size:14px;color:#2b2b57;letter-spacing:0.191px;left:247px;">11:55:58</div>
<div class="a t" style="top:527.00px;height:20px;line-height:20px;font-size:14px;color:#2b2b57;letter-spacing:-0.206px;left:353.3px;">Tab A</div>
<div class="a t" style="top:527.00px;height:20px;line-height:20px;font-size:14px;color:#2b2b57;letter-spacing:-0.007px;left:460px;">unknown</div>
<div class="a t" style="top:527.00px;height:20px;line-height:20px;font-size:14px;color:#2b2b57;letter-spacing:-0.183px;left:578.3px;">Unknown type: No message</div>
<svg style="left:0;top:0" width="1921" height="1086"><rect x="814.9" y="536.25" width="5.6" height="1.25" fill="#2b2b57"/></svg>
<div class="a" style="left:81px;top:593px;width:828px;height:1px;background:#d3d3e1;"></div>
<svg style="left:94.2px;top:566px" width="17.7" height="18" viewBox="0 0 17.7 18"><path d="M2 0 H15.7 A2 2 0 0 1 17.7 2 V12.6 Q17.7 14.2 16.3 14.8 L10.3 17.5 Q8.85 18.15 7.4 17.5 L1.4 14.8 Q0 14.2 0 12.6 V2 A2 2 0 0 1 2 0Z" fill="#cf5058"/></svg>
<div class="a t" style="top:565.00px;height:20px;line-height:20px;font-size:12.5px;color:#2b2b57;letter-spacing:-0.156px;left:121.4px;">Error</div>
<div class="a t" style="top:564.00px;height:20px;line-height:20px;font-size:14px;color:#2b2b57;letter-spacing:0.191px;left:247px;">11:55:58</div>
<div class="a t" style="top:564.00px;height:20px;line-height:20px;font-size:14px;color:#2b2b57;letter-spacing:-0.206px;left:353.3px;">Tab A</div>
<div class="a t" style="top:564.00px;height:20px;line-height:20px;font-size:14px;color:#2b2b57;letter-spacing:-0.007px;left:460px;">unknown</div>
<div class="a t" style="top:564.00px;height:20px;line-height:20px;font-size:14px;color:#2b2b57;letter-spacing:-0.183px;left:578.3px;">Unknown type: No message</div>
<svg style="left:0;top:0" width="1921" height="1086"><rect x="814.9" y="573.25" width="5.6" height="1.25" fill="#2b2b57"/></svg>
<div class="a" style="left:81px;top:594px;width:828px;height:36px;background:#f3f3f8;"></div>
<div class="a" style="left:81px;top:630px;width:828px;height:1px;background:#d3d3e1;"></div>
<svg style="left:94.2px;top:603px" width="17.7" height="18" viewBox="0 0 17.7 18"><path d="M2 0 H15.7 A2 2 0 0 1 17.7 2 V12.6 Q17.7 14.2 16.3 14.8 L10.3 17.5 Q8.85 18.15 7.4 17.5 L1.4 14.8 Q0 14.2 0 12.6 V2 A2 2 0 0 1 2 0Z" fill="#cf5058"/></svg>
<div class="a t" style="top:602.00px;height:20px;line-height:20px;font-size:12.5px;color:#2b2b57;letter-spacing:-0.156px;left:121.4px;">Error</div>
<div class="a t" style="top:601.00px;height:20px;line-height:20px;font-size:14px;color:#2b2b57;letter-spacing:0.191px;left:247px;">11:55:58</div>
<div class="a t" style="top:601.00px;height:20px;line-height:20px;font-size:14px;color:#2b2b57;letter-spacing:-0.206px;left:353.3px;">Tab A</div>
<div class="a t" style="top:601.00px;height:20px;line-height:20px;font-size:14px;color:#2b2b57;letter-spacing:-0.007px;left:460px;">unknown</div>
<div class="a t" style="top:601.00px;height:20px;line-height:20px;font-size:14px;color:#2b2b57;letter-spacing:-0.183px;left:578.3px;">Unknown type: No message</div>
<svg style="left:0;top:0" width="1921" height="1086"><rect x="814.9" y="610.25" width="5.6" height="1.25" fill="#2b2b57"/></svg>
<div class="a" style="left:81px;top:667px;width:828px;height:1px;background:#d3d3e1;"></div>
<svg style="left:94.2px;top:640px" width="17.7" height="18" viewBox="0 0 17.7 18"><path d="M2 0 H15.7 A2 2 0 0 1 17.7 2 V12.6 Q17.7 14.2 16.3 14.8 L10.3 17.5 Q8.85 18.15 7.4 17.5 L1.4 14.8 Q0 14.2 0 12.6 V2 A2 2 0 0 1 2 0Z" fill="#4f97b7"/></svg>
<div class="a t" style="top:639.00px;height:20px;line-height:20px;font-size:12.5px;color:#2b2b57;letter-spacing:-0.096px;left:121.4px;">User Interaction</div>
<div class="a t" style="top:638.00px;height:20px;line-height:20px;font-size:14px;color:#2b2b57;letter-spacing:0.191px;left:247px;">11:55:59</div>
<div class="a t" style="top:638.00px;height:20px;line-height:20px;font-size:14px;color:#2b2b57;letter-spacing:-0.206px;left:353.3px;">Tab A</div>
<div class="a t" style="top:638.00px;height:20px;line-height:20px;font-size:14px;color:#2b2b57;letter-spacing:-0.007px;left:460px;">unknown</div>
<div class="a t" style="top:638.00px;height:20px;line-height:20px;font-size:14px;color:#2b2b57;letter-spacing:-0.007px;left:578.3px;">unknown</div>
<div class="a t" style="top:638.00px;height:20px;line-height:20px;font-size:14px;color:#2b2b57;letter-spacing:-0.007px;left:814.7px;">unknown</div>
<div class="a" style="left:81px;top:668px;width:828px;height:36px;background:#f3f3f8;"></div>
<div class="a" style="left:81px;top:704px;width:828px;height:1px;background:#d3d3e1;"></div>
<svg style="left:94.2px;top:677px" width="17.7" height="18" viewBox="0 0 17.7 18"><path d="M2 0 H15.7 A2 2 0 0 1 17.7 2 V12.6 Q17.7 14.2 16.3 14.8 L10.3 17.5 Q8.85 18.15 7.4 17.5 L1.4 14.8 Q0 14.2 0 12.6 V2 A2 2 0 0 1 2 0Z" fill="#4f97b7"/></svg>
<div class="a t" style="top:676.00px;height:20px;line-height:20px;font-size:12.5px;color:#2b2b57;letter-spacing:-0.096px;left:121.4px;">User Interaction</div>
<div class="a t" style="top:675.00px;height:20px;line-height:20px;font-size:14px;color:#2b2b57;letter-spacing:0.191px;left:247px;">11:55:59</div>
<div class="a t" style="top:675.00px;height:20px;line-height:20px;font-size:14px;color:#2b2b57;letter-spacing:-0.206px;left:353.3px;">Tab A</div>
<div class="a t" style="top:675.00px;height:20px;line-height:20px;font-size:14px;color:#2b2b57;letter-spacing:-0.007px;left:460px;">unknown</div>
<div class="a t" style="top:675.00px;height:20px;line-height:20px;font-size:14px;color:#2b2b57;letter-spacing:-0.007px;left:578.3px;">unknown</div>
<div class="a t" style="top:675.00px;height:20px;line-height:20px;font-size:14px;color:#2b2b57;letter-spacing:-0.007px;left:814.7px;">unknown</div>
<div class="a" style="left:81px;top:741px;width:828px;height:1px;background:#d3d3e1;"></div>
<svg style="left:94.2px;top:714px" width="17.7" height="18" viewBox="0 0 17.7 18"><path d="M2 0 H15.7 A2 2 0 0 1 17.7 2 V12.6 Q17.7 14.2 16.3 14.8 L10.3 17.5 Q8.85 18.15 7.4 17.5 L1.4 14.8 Q0 14.2 0 12.6 V2 A2 2 0 0 1 2 0Z" fill="#b3b3c8"/></svg>
<div class="a t" style="top:713.00px;height:20px;line-height:20px;font-size:12.5px;color:#2b2b57;letter-spacing:-0.376px;left:121.4px;">Custom Event</div>
<div class="a t" style="top:712.00px;height:20px;line-height:20px;font-size:14px;color:#2b2b57;letter-spacing:0.191px;left:247px;">11:55:59</div>
<div class="a t" style="top:712.00px;height:20px;line-height:20px;font-size:14px;color:#2b2b57;letter-spacing:-0.206px;left:353.3px;">Tab A</div>
<div class="a t" style="top:712.00px;height:20px;line-height:20px;font-size:14px;color:#2b2b57;letter-spacing:-0.007px;left:460px;">unknown</div>
<svg style="left:0;top:0" width="1921" height="1086"><rect x="814.9" y="721.25" width="5.6" height="1.25" fill="#2b2b57"/></svg>
<div class="a" style="left:81px;top:742px;width:828px;height:36px;background:#f3f3f8;"></div>
<div class="a" style="left:81px;top:778px;width:828px;height:1px;background:#d3d3e1;"></div>
<svg style="left:94.2px;top:751px" width="17.7" height="18" viewBox="0 0 17.7 18"><path d="M2 0 H15.7 A2 2 0 0 1 17.7 2 V12.6 Q17.7 14.2 16.3 14.8 L10.3 17.5 Q8.85 18.15 7.4 17.5 L1.4 14.8 Q0 14.2 0 12.6 V2 A2 2 0 0 1 2 0Z" fill="#4f97b7"/></svg>
<div class="a t" style="top:750.00px;height:20px;line-height:20px;font-size:12.5px;color:#2b2b57;letter-spacing:-0.096px;left:121.4px;">User Interaction</div>
<div class="a t" style="top:749.00px;height:20px;line-height:20px;font-size:14px;color:#2b2b57;letter-spacing:0.191px;left:247px;">11:55:59</div>
<div class="a t" style="top:749.00px;height:20px;line-height:20px;font-size:14px;color:#2b2b57;letter-spacing:-0.206px;left:353.3px;">Tab A</div>
<div class="a t" style="top:749.00px;height:20px;line-height:20px;font-size:14px;color:#2b2b57;letter-spacing:-0.007px;left:460px;">unknown</div>
<div class="a t" style="top:749.00px;height:20px;line-height:20px;font-size:14px;color:#2b2b57;letter-spacing:-0.007px;left:578.3px;">unknown</div>
<div class="a t" style="top:749.00px;height:20px;line-height:20px;font-size:14px;color:#2b2b57;letter-spacing:-0.007px;left:814.7px;">unknown</div>
<div class="a" style="left:81px;top:815px;width:828px;height:1px;background:#d3d3e1;"></div>
<svg style="left:94.2px;top:788px" width="17.7" height="18" viewBox="0 0 17.7 18"><path d="M2 0 H15.7 A2 2 0 0 1 17.7 2 V12.6 Q17.7 14.2 16.3 14.8 L10.3 17.5 Q8.85 18.15 7.4 17.5 L1.4 14.8 Q0 14.2 0 12.6 V2 A2 2 0 0 1 2 0Z" fill="#4f97b7"/></svg>
<div class="a t" style="top:787.00px;height:20px;line-height:20px;font-size:12.5px;color:#2b2b57;letter-spacing:-0.096px;left:121.4px;">User Interaction</div>
<div class="a t" style="top:786.00px;height:20px;line-height:20px;font-size:14px;color:#2b2b57;letter-spacing:0.191px;left:247px;">11:55:59</div>
<div class="a t" style="top:786.00px;height:20px;line-height:20px;font-size:14px;color:#2b2b57;letter-spacing:-0.206px;left:353.3px;">Tab A</div>
<div class="a t" style="top:786.00px;height:20px;line-height:20px;font-size:14px;color:#2b2b57;letter-spacing:-0.007px;left:460px;">unknown</div>
<div class="a t" style="top:786.00px;height:20px;line-height:20px;font-size:14px;color:#2b2b57;letter-spacing:-0.007px;left:578.3px;">unknown</div>
<div class="a t" style="top:786.00px;height:20px;line-height:20px;font-size:14px;color:#2b2b57;letter-spacing:-0.007px;left:814.7px;">unknown</div>
<div class="a" style="left:81px;top:816px;width:828px;height:4px;background:#f3f3f8;"></div>
<div class="a" style="left:914px;top:228px;width:6px;height:144px;background:#d0d0dd;border-radius:3px;"></div>
<div class="a" style="left:86px;top:825px;width:810px;height:6px;background:#d1d1de;border-radius:3px;"></div>
<div class="a" style="left:948px;top:477px;width:2px;height:34px;background:#3a3a72;border-radius:1px;"></div>
<div class="a" style="left:953px;top:131px;width:884px;height:725px;background:#eaeaf4;border:2px solid #cbcbda;border-radius:12px;"></div>
<div class="a t" style="top:150.00px;height:20px;line-height:20px;font-size:16.5px;color:#2b2b57;font-weight:700;letter-spacing:-0.407px;left:971.6px;">Event details</div>
<div class="a" style="left:1658.7px;top:149px;width:148.3px;height:32px;background:#dcdce8;border-radius:9px;"></div>
<div class="a t" style="top:154.00px;height:20px;line-height:20px;font-size:14px;color:#2b2b57;letter-spacing:-0.399px;left:1671.5px;-webkit-text-stroke:.28px currentColor;">Copy Event URL</div>
<svg style="left:1781.0px;top:157.1px" width="16" height="16" viewBox="0 0 16 16" fill="none" stroke="#2b2b57" stroke-width="1.4" stroke-linecap="round" stroke-linejoin="round"><g transform="translate(8 8) rotate(-45)"><path d="M0.75 -0.2 V-1.6 Q0.75 -2.8 -0.45 -2.8 H-5.65 Q-6.85 -2.8 -6.85 -1.6 V1.6 Q-6.85 2.8 -5.65 2.8 H-4.05"/><path d="M-0.75 0.2 V1.6 Q-0.75 2.8 0.45 2.8 H5.65 Q6.85 2.8 6.85 1.6 V-1.6 Q6.85 -2.8 5.65 -2.8 H4.05"/></g></svg>
<svg style="left:980px;top:196px" width="17.7" height="18" viewBox="0 0 17.7 18"><path d="M2 0 H15.7 A2 2 0 0 1 17.7 2 V12.6 Q17.7 14.2 16.3 14.8 L10.3 17.5 Q8.85 18.15 7.4 17.5 L1.4 14.8 Q0 14.2 0 12.6 V2 A2 2 0 0 1 2 0Z" fill="#cf5058"/></svg>
<div class="a t" style="top:194.00px;height:20px;line-height:20px;font-size:14px;color:#4749c4;letter-spacing:0.295px;left:1007.5px;-webkit-text-stroke:.28px currentColor;">Error</div>
<svg style="left:1065px;top:196px" width="17.7" height="18" viewBox="0 0 17.7 18"><path d="M2 0 H15.7 A2 2 0 0 1 17.7 2 V12.6 Q17.7 14.2 16.3 14.8 L10.3 17.5 Q8.85 18.15 7.4 17.5 L1.4 14.8 Q0 14.2 0 12.6 V2 A2 2 0 0 1 2 0Z" fill="#9a80d8"/></svg>
<div class="a t" style="top:194.00px;height:20px;line-height:20px;font-size:14px;color:#2b2b57;letter-spacing:-0.065px;left:1092px;-webkit-text-stroke:.28px currentColor;">Request</div>
<div class="a" style="left:971px;top:224px;width:848px;height:1px;background:#d3d3e1;"></div>
<div class="a" style="left:971px;top:223px;width:81px;height:2px;background:#4244c4;"></div>
<div class="a t" style="top:240.00px;height:20px;line-height:20px;font-size:14px;color:#2b2b57;font-weight:700;letter-spacing:0.067px;left:971.6px;">Error attributes</div>
<div class="a" style="left:971px;top:269px;width:832px;height:152px;background:#fcfcfd;border:2px solid #d0d0de;border-radius:7px;overflow:hidden;"></div>
<div class="a" style="left:973px;top:271px;width:828px;height:36px;background:#f3f3f8;border-radius:5px 5px 0 0;"></div>
<div class="a" style="left:973px;top:307px;width:828px;height:2px;background:#d2d2df;"></div>
<div class="a t" style="top:278.00px;height:20px;line-height:20px;font-size:14px;color:#4d4d80;letter-spacing:-0.542px;left:985.7px;-webkit-text-stroke:.28px currentColor;">Key</div>
<div class="a t" style="top:278.00px;height:20px;line-height:20px;font-size:14px;color:#4d4d80;letter-spacing:0.244px;left:1192.3px;-webkit-text-stroke:.28px currentColor;">Value</div>
<div class="a t" style="top:316.00px;height:20px;line-height:20px;font-size:14px;color:#2b2b57;letter-spacing:-0.062px;left:985.3px;">Error ID</div>
<div class="a t" style="top:316.00px;height:20px;line-height:20px;font-size:14px;color:#2b2b57;letter-spacing:0.108px;left:1180px;">62a34074d88ed323</div>
<div class="a" style="left:973px;top:345px;width:828px;height:1px;background:#d3d3e1;"></div>
<div class="a t" style="top:353.00px;height:20px;line-height:20px;font-size:14px;color:#2b2b57;letter-spacing:0.469px;left:985.3px;">Is fatal</div>
<div class="a t" style="top:353.00px;height:20px;line-height:20px;font-size:14px;color:#2b2b57;letter-spacing:-0.703px;left:1180px;">No</div>
<div class="a" style="left:973px;top:382px;width:828px;height:1px;background:#d3d3e1;"></div>
<div class="a t" style="top:390.00px;height:20px;line-height:20px;font-size:14px;color:#2b2b57;letter-spacing:0.053px;left:985.3px;">Error type</div>
<div class="a" style="left:1180px;top:389px;width:97.5px;height:23.5px;background:#dcdce8;border-radius:8px;"></div>
<div class="a t" style="top:390.00px;height:20px;line-height:20px;font-size:14px;color:#2b2b57;letter-spacing:-0.094px;left:1184.6px;-webkit-text-stroke:.55px currentColor;">RUM error</div>
<svg style="left:1260.5px;top:395px;" width="11" height="12" viewBox="0 0 11 12" fill="none" stroke="#2b2b57" stroke-width="1.4" stroke-linecap="round" stroke-linejoin="round"><path d="M5.5 0.7 V10.9 M0.9 6.6 L5.5 11.1 L10.1 6.6"/></svg>
<div class="a t" style="top:428.00px;height:20px;line-height:20px;font-size:14px;color:#2b2b57;font-weight:700;letter-spacing:-0.097px;left:971.6px;">Rum exception attributes</div>
<div class="a" style="left:971px;top:457px;width:832px;height:300px;background:#fcfcfd;border:2px solid #d0d0de;border-radius:7px;overflow:hidden;"></div>
<div class="a" style="left:973px;top:459px;width:828px;height:36px;background:#f3f3f8;border-radius:5px 5px 0 0;"></div>
<div class="a" style="left:973px;top:495px;width:828px;height:2px;background:#d2d2df;"></div>
<div class="a t" style="top:466.00px;height:20px;line-height:20px;font-size:14px;color:#4d4d80;letter-spacing:-0.542px;left:985.7px;-webkit-text-stroke:.28px currentColor;">Key</div>
<div class="a t" style="top:466.00px;height:20px;line-height:20px;font-size:14px;color:#4d4d80;letter-spacing:0.244px;left:1192.3px;-webkit-text-stroke:.28px currentColor;">Value</div>
<div class="a t" style="top:504.00px;height:20px;line-height:20px;font-size:14px;color:#2b2b57;letter-spacing:-0.044px;left:985.3px;">Error source</div>
<div class="a" style="left:973px;top:533px;width:828px;height:1px;background:#d3d3e1;"></div>
<div class="a t" style="top:541.00px;height:20px;line-height:20px;font-size:14px;color:#2b2b57;letter-spacing:0.043px;left:985.3px;">Exception file name</div>
<div class="a" style="left:973px;top:570px;width:828px;height:1px;background:#d3d3e1;"></div>
<div class="a t" style="top:578.00px;height:20px;line-height:20px;font-size:14px;color:#2b2b57;letter-spacing:0.049px;left:985.3px;">Exception column number</div>
<div class="a" style="left:973px;top:607px;width:828px;height:1px;background:#d3d3e1;"></div>
<div class="a t" style="top:615.00px;height:20px;line-height:20px;font-size:14px;color:#2b2b57;letter-spacing:0.037px;left:985.3px;">Exception line number</div>
<div class="a" style="left:973px;top:644px;width:828px;height:1px;background:#d3d3e1;"></div>
<div class="a t" style="top:652.00px;height:20px;line-height:20px;font-size:14px;color:#2b2b57;letter-spacing:-0.129px;left:985.3px;">Exception message</div>
<div class="a" style="left:973px;top:681px;width:828px;height:1px;background:#d3d3e1;"></div>
<div class="a t" style="top:689.00px;height:20px;line-height:20px;font-size:14px;color:#2b2b57;letter-spacing:-0.060px;left:985.3px;">Exception type</div>
<div class="a" style="left:973px;top:718px;width:828px;height:1px;background:#d3d3e1;"></div>
<div class="a t" style="top:726.00px;height:20px;line-height:20px;font-size:14px;color:#2b2b57;letter-spacing:-0.003px;left:985.3px;">Exception stack trace</div>
<div class="a" style="left:61px;top:864px;width:1777px;height:170px;background:#eaeaf4;border-radius:12px;"></div>
<div class="a" style="left:77px;top:880px;width:1744.5px;height:32px;background:#e0e0ec;border-radius:9px;"></div>
<div class="a t" style="top:886.00px;height:20px;line-height:20px;font-size:12px;color:#4d4d82;letter-spacing:-0.222px;left:170.70px;">Zoom</div>
<svg style="left:0;top:0" width="1921" height="1086"><rect x="207.3" y="883.4" width="1607.4" height="23.2" rx="11.6" fill="#c6c6db"/><rect x="208.8" y="885" width="1604.5" height="19.9" rx="9.95" fill="#4e4ecb"/></svg>
<svg style="left:0;top:0" width="1921" height="1086"><circle cx="218.6" cy="894.95" r="9.4" fill="#f4f4f9" stroke="#4e4ecb" stroke-width="1.1"/><rect x="218.0" y="888.6" width="2" height="12.7" fill="#5a5a82"/><path d="M215.7 892.5 L213.5 894.6 L215.7 896.7 M222.29999999999998 892.5 L224.5 894.6 L222.29999999999998 896.7" stroke="#25254f" stroke-width="1.5" fill="none"/></svg>
<svg style="left:0;top:0" width="1921" height="1086"><circle cx="1803.4" cy="894.95" r="9.4" fill="#f4f4f9" stroke="#4e4ecb" stroke-width="1.1"/><rect x="1802.8000000000002" y="888.6" width="2" height="12.7" fill="#5a5a82"/><path d="M1800.5 892.5 L1798.3000000000002 894.6 L1800.5 896.7 M1807.1000000000001 892.5 L1809.3000000000002 894.6 L1807.1000000000001 896.7" stroke="#25254f" stroke-width="1.5" fill="none"/></svg>
<div class="a" style="left:206.5px;top:920px;width:1614.5px;height:1.2px;background:#d3d3e1;"></div>
<div class="a" style="left:206.5px;top:944px;width:1614.5px;height:1.2px;background:#d3d3e1;"></div>
<div class="a" style="left:206.5px;top:968px;width:1614.5px;height:1.2px;background:#d3d3e1;"></div>
<div class="a" style="left:206.5px;top:991.7px;width:1614.5px;height:1.6px;background:#4a4a86;"></div>
<div class="a t" style="top:924.00px;height:20px;line-height:20px;font-size:12px;color:#4d4d82;letter-spacing:-0.099px;left:78.50px;">Errors and annoyances</div>
<div class="a t" style="top:948.00px;height:20px;line-height:20px;font-size:12px;color:#4d4d82;letter-spacing:0.056px;left:109.50px;">User interactions</div>
<div class="a t" style="top:972.00px;height:20px;line-height:20px;font-size:12px;color:#4d4d82;letter-spacing:-0.119px;left:165.20px;">Others</div>
<svg style="left:0;top:0" width="1921" height="1086"><rect x="215.8" y="922.1" width="28.2" height="20.3" rx="2" fill="#e05f68"/></svg>
<div class="a t" style="top:924.00px;height:20px;line-height:20px;font-size:12px;color:#fbfbfe;left:226.56px;">9</div>
<svg style="left:0;top:0" width="1921" height="1086"><rect x="443.7" y="922.1" width="28.4" height="20.3" rx="2" fill="#e05f68"/></svg>
<div class="a t" style="top:924.00px;height:20px;line-height:20px;font-size:12px;color:#fbfbfe;left:451.06px;">9+</div>
<svg style="left:0;top:0" width="1921" height="1086"><rect x="236" y="946.2" width="28.2" height="20.3" rx="2" fill="#65a6c8"/></svg>
<div class="a t" style="top:948.00px;height:20px;line-height:20px;font-size:12px;color:#fbfbfe;left:246.76px;">4</div>
<svg style="left:0;top:0" width="1921" height="1086"><rect x="281" y="946.2" width="28.2" height="20.3" rx="2" fill="#65a6c8"/></svg>
<div class="a t" style="top:948.00px;height:20px;line-height:20px;font-size:12px;color:#fbfbfe;left:291.76px;">2</div>
<svg style="left:0;top:0" width="1921" height="1086"><rect x="359.5" y="946.2" width="28.5" height="20.3" rx="2" fill="#65a6c8"/></svg>
<div class="a t" style="top:948.00px;height:20px;line-height:20px;font-size:12px;color:#fbfbfe;left:370.41px;">2</div>
<svg style="left:0;top:0" width="1921" height="1086"><rect x="459.7" y="946.2" width="28.3" height="20.3" rx="2" fill="#65a6c8"/></svg>
<div class="a t" style="top:948.00px;height:20px;line-height:20px;font-size:12px;color:#fbfbfe;left:470.51px;">4</div>
<svg style="left:493px;top:946.2px" width="21" height="21" viewBox="0 0 21 21"><path d="M2 0 H19 A2 2 0 0 1 21 2 V14.6 Q21 15.7 20 16.1 L11.2 20.3 Q10.5 20.7 9.8 20.3 L1 16.1 Q0 15.7 0 14.6 V2 A2 2 0 0 1 2 0Z" fill="#65a6c8"/></svg>
<svg style="left:555.5px;top:946.2px" width="21" height="21" viewBox="0 0 21 21"><path d="M2 0 H19 A2 2 0 0 1 21 2 V14.6 Q21 15.7 20 16.1 L11.2 20.3 Q10.5 20.7 9.8 20.3 L1 16.1 Q0 15.7 0 14.6 V2 A2 2 0 0 1 2 0Z" fill="#65a6c8"/></svg>
<svg style="left:0;top:0" width="1921" height="1086"><rect x="620.7" y="946.2" width="128.3" height="20.3" rx="2" fill="#65a6c8"/></svg>
<div class="a t" style="top:948.00px;height:20px;line-height:20px;font-size:12px;color:#fbfbfe;left:681.51px;">9</div>
<svg style="left:785px;top:946.2px" width="21" height="21" viewBox="0 0 21 21"><path d="M2 0 H19 A2 2 0 0 1 21 2 V14.6 Q21 15.7 20 16.1 L11.2 20.3 Q10.5 20.7 9.8 20.3 L1 16.1 Q0 15.7 0 14.6 V2 A2 2 0 0 1 2 0Z" fill="#65a6c8"/></svg>
<svg style="left:0;top:0" width="1921" height="1086"><rect x="843.7" y="946.2" width="52.3" height="20.3" rx="2" fill="#65a6c8"/></svg>
<div class="a t" style="top:948.00px;height:20px;line-height:20px;font-size:12px;color:#fbfbfe;left:866.51px;">3</div>
<svg style="left:0;top:0" width="1921" height="1086"><rect x="987" y="946.2" width="28.0" height="20.3" rx="2" fill="#65a6c8"/></svg>
<div class="a t" style="top:948.00px;height:20px;line-height:20px;font-size:12px;color:#fbfbfe;left:997.66px;">2</div>
<svg style="left:0;top:0" width="1921" height="1086"><rect x="223" y="970.2" width="28.0" height="20.3" rx="2" fill="#c0c0d8"/></svg>
<div class="a t" style="top:972.00px;height:20px;line-height:20px;font-size:12px;color:#fbfbfe;left:233.66px;">2</div>
<svg style="left:0;top:0" width="1921" height="1086"><rect x="447.7" y="970.2" width="28.3" height="20.3" rx="2" fill="#c0c0d8"/></svg>
<div class="a t" style="top:972.00px;height:20px;line-height:20px;font-size:12px;color:#fbfbfe;left:458.51px;">3</div>
<svg style="left:0;top:0" width="1921" height="1086"><rect x="811.7" y="970.2" width="53.3" height="20.3" rx="2" fill="#c0c0d8"/></svg>
<div class="a t" style="top:972.00px;height:20px;line-height:20px;font-size:12px;color:#fbfbfe;left:835.01px;">6</div>
<div class="a t" style="top:994.00px;height:20px;line-height:20px;font-size:12px;color:#41417a;letter-spacing:0.172px;left:226.00px;">11:56</div>
<div class="a t" style="top:994.00px;height:20px;line-height:20px;font-size:12px;color:#41417a;letter-spacing:0.096px;left:334.20px;">11:56:15</div>
<div class="a t" style="top:994.00px;height:20px;line-height:20px;font-size:12px;color:#41417a;letter-spacing:0.096px;left:450.70px;">11:56:30</div>
<div class="a t" style="top:994.00px;height:20px;line-height:20px;font-size:12px;color:#41417a;letter-spacing:0.096px;left:567.20px;">11:56:45</div>
<div class="a t" style="top:994.00px;height:20px;line-height:20px;font-size:12px;color:#41417a;letter-spacing:0.172px;left:692.00px;">11:57</div>
<div class="a t" style="top:994.00px;height:20px;line-height:20px;font-size:12px;color:#41417a;letter-spacing:0.096px;left:800.20px;">11:57:15</div>
<div class="a t" style="top:994.00px;height:20px;line-height:20px;font-size:12px;color:#41417a;letter-spacing:0.096px;left:916.70px;">11:57:30</div>
<div class="a t" style="top:994.00px;height:20px;line-height:20px;font-size:12px;color:#41417a;letter-spacing:0.096px;left:1033.20px;">11:57:45</div>
<div class="a t" style="top:994.00px;height:20px;line-height:20px;font-size:12px;color:#41417a;letter-spacing:0.172px;left:1158.00px;">11:58</div>
<div class="a t" style="top:994.00px;height:20px;line-height:20px;font-size:12px;color:#41417a;letter-spacing:0.096px;left:1266.20px;">11:58:15</div>
<div class="a t" style="top:994.00px;height:20px;line-height:20px;font-size:12px;color:#41417a;letter-spacing:0.096px;left:1382.70px;">11:58:30</div>
<div class="a t" style="top:994.00px;height:20px;line-height:20px;font-size:12px;color:#41417a;letter-spacing:0.096px;left:1499.20px;">11:58:45</div>
<div class="a t" style="top:994.00px;height:20px;line-height:20px;font-size:12px;color:#41417a;letter-spacing:0.172px;left:1624.00px;">11:59</div>
<div class="a t" style="top:994.00px;height:20px;line-height:20px;font-size:12px;color:#41417a;letter-spacing:0.096px;left:1732.20px;">11:59:15</div>
</div></body></html>
